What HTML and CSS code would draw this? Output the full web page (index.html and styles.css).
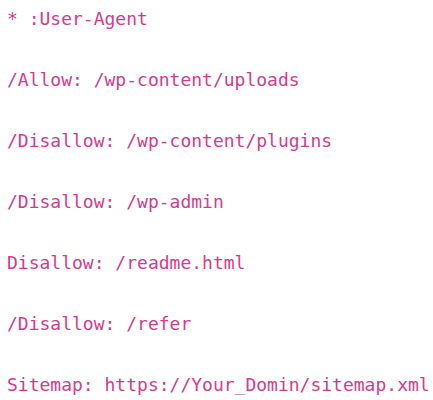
FILE: index.html
```html
<!DOCTYPE html>
<html>
<head>
<meta charset="utf-8">
<link rel="stylesheet" href="styles.css">
</head>
<body>
<div class="code">
  <div class="line">* :User-Agent</div>
  <div class="line">/Allow: /wp-content/uploads</div>
  <div class="line">/Disallow: /wp-content/plugins</div>
  <div class="line">/Disallow: /wp-admin</div>
  <div class="line">Disallow: /readme.html</div>
  <div class="line">/Disallow: /refer</div>
  <div class="line last">Sitemap: https://Your_Domin/sitemap.xml</div>
</div>
</body>
</html>
```
FILE: styles.css
```css
html, body {
  margin: 0;
  background: #ffffff;
  overflow: hidden;
}
.code {
  display: flex;
  flex-direction: column;
  padding: 4px 0 0 7px;
  font-family: "DejaVu Sans Mono", monospace;
  font-size: 18px;
  color: #d63b8a;
  white-space: pre;
}
.line {
  height: 61px;
  line-height: 30px;
}
.line.last {
  height: auto;
}
```
